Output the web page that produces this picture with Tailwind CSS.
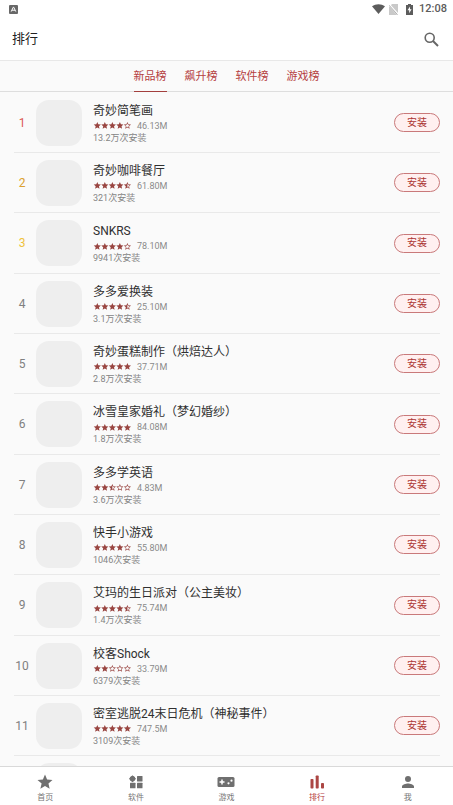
<!DOCTYPE html>
<html lang="zh-CN">
<head>
<meta charset="utf-8">
<meta name="viewport" content="width=device-width, initial-scale=1">
<title>排行</title>
<script src="https://cdn.jsdelivr.net/npm/@tailwindcss/browser@4"></script>
</head>
<body class="flex h-screen flex-col overflow-hidden bg-[#fafafa] font-[Roboto,'Noto_Sans_CJK_SC',sans-serif] text-[#303030]">
<svg class="hidden" aria-hidden="true">
  <symbol id="star" viewBox="0 0 24 24"><path d="M12 17.3 18.2 21l-1.6-7L22 9.2l-7.2-.6L12 2 9.2 8.6 2 9.2 7.5 14l-1.7 7z"/></symbol>
  <symbol id="star-half" viewBox="0 0 24 24"><path d="m22 9.2-7.2-.6L12 2 9.2 8.6 2 9.2 7.5 14l-1.7 7 6.2-3.7 6.2 3.7-1.6-7zM12 15.4V6.1l1.7 4 4.4.4-3.3 2.9 1 4.3z"/></symbol>
  <symbol id="star-empty" viewBox="0 0 24 24"><path d="m22 9.2-7.2-.6L12 2 9.2 8.6 2 9.2 7.5 14l-1.7 7 6.2-3.7 6.2 3.7-1.6-7zM12 15.4l-3.8 2.3 1-4.3-3.3-2.9 4.4-.4 1.7-4 1.7 4 4.4.4-3.3 2.9 1 4.3z"/></symbol>
</svg>

<header class="shrink-0 border-b border-[#e8e8e8] bg-white">
  <div class="flex h-[18px] items-center justify-between pr-1.5 pl-[9px] text-[#5c5c5c]">
    <svg class="size-[9px]" viewBox="0 0 9 9"><rect width="9" height="9" rx="1" fill="#686868"/><path d="M2.2 6.6 4.2 2.3h.6l2 4.3M3 5.2h3" fill="none" stroke="#fff" stroke-width="1"/></svg>
    <div class="flex items-center">
      <svg class="h-2.5 w-[13px]" viewBox="0 0 13 10"><path d="M6.5 10 0 2.2C3.700-.5 9.300-.5 13 2.200z" fill="#5c5c5c"/></svg>
      <svg class="ml-1 h-[11px] w-[9px]" viewBox="0 0 9 11"><path d="M3 0h6v11H0V3z" fill="#c9c9c9"/><path d="m0 .5 9 10" stroke="#fff" stroke-width="2"/><path d="m0 1.200 8.500 9.500" stroke="#999" stroke-width=".8"/></svg>
      <svg class="ml-2 h-[11px] w-[7px]" viewBox="0 0 7 11"><path d="M2 0h3v1h2v10H0V1h2z" fill="#5c5c5c"/><path d="M4 2.500 1.500 6.300h1.700v3L5.600 5.300H4z" fill="#fff"/></svg>
      <span class="ml-1.5 text-[11px] leading-[18px] font-medium">12:08</span>
    </div>
  </div>
  <div class="flex h-[42px] items-center justify-between pr-3.5 pl-3">
    <h1 class="text-[13px] leading-5 text-[#212121]">排行</h1>
    <button type="button" aria-label="搜索"><svg class="size-[15px]" viewBox="0 0 15 15" fill="none" stroke="#666" stroke-width="1.600"><circle cx="5.700" cy="5.700" r="4.500"/><path d="m9 9 5 5" stroke-width="1.900"/></svg></button>
  </div>
</header>

<nav class="flex h-[31px] shrink-0 justify-center gap-[18px] border-b border-[#dedede] text-[11px] text-[#b5403f]" aria-label="榜单">
  <a href="#new" class="-mb-px flex items-center border-b border-[#a33f3d] pt-[3px]" aria-current="page">新品榜</a>
  <a href="#rise" class="flex items-center pt-[3px]">飙升榜</a>
  <a href="#apps" class="flex items-center pt-[3px]">软件榜</a>
  <a href="#games" class="flex items-center pt-[3px]">游戏榜</a>
</nav>

<main class="min-h-0 flex-1 overflow-hidden">
  <ol id="list" class="mr-[13px] ml-3.5 pt-px"></ol>
</main>

<nav class="grid shrink-0 grid-cols-5 border-t border-[#d9d9d9] bg-white pt-1.5 pb-px text-[8px] leading-[13px] text-[#757575]" aria-label="主导航">
  <a href="#home" class="flex flex-col items-center"><svg class="size-[18px]" fill="#6f6f6f"><use href="#star"/></svg>首页</a>
  <a href="#software" class="flex flex-col items-center"><svg class="size-[18px]" viewBox="0 0 18 18" fill="#6f6f6f"><path d="M5.500 2.200 9 5.700 5.500 9.200 2 5.700z"/><circle cx="5.500" cy="5.700" r="2.700"/><rect x="10" y="3" width="5.500" height="5.500" rx=".5"/><rect x="3" y="9.800" width="5.500" height="5.500" rx=".5"/><rect x="10" y="9.800" width="5.500" height="5.500" rx=".5"/></svg>软件</a>
  <a href="#game" class="flex flex-col items-center"><svg class="size-[18px]" viewBox="0 0 18 18"><rect x=".5" y="4" width="17" height="10" rx="1.500" fill="#6f6f6f"/><path d="M2.500 9h5M5 6.500v5" stroke="#fff" stroke-width="1.500"/><circle cx="11.500" cy="10.300" r="1.100" fill="#fff"/><circle cx="14.500" cy="7.700" r="1.100" fill="#fff"/></svg>游戏</a>
  <a href="#rank" class="flex flex-col items-center text-[#b5403f]" aria-current="page"><svg class="size-[18px]" viewBox="0 0 18 18" fill="#ac4644"><rect x="2.500" y="6" width="3" height="9.500" rx=".8"/><rect x="7.700" y="2.500" width="3" height="13" rx=".8"/><rect x="13" y="10" width="3" height="5.500" rx=".8"/></svg>排行</a>
  <a href="#me" class="flex flex-col items-center"><svg class="size-[18px]" viewBox="0 0 24 24" fill="#6f6f6f"><path d="M12 12a4 4 0 1 0 0-8 4 4 0 0 0 0 8zm0 2c-2.700 0-8 1.300-8 4v2h16v-2c0-2.700-5.300-4-8-4z"/></svg>我</a>
</nav>

<script>
const apps = [
  ["奇妙简笔画", 4, "46.13M", "13.2万次安装"],
  ["奇妙咖啡餐厅", 4.5, "61.80M", "321次安装"],
  ["SNKRS", 4, "78.10M", "9941次安装"],
  ["多多爱换装", 4.5, "25.10M", "3.1万次安装"],
  ["奇妙蛋糕制作（烘焙达人）", 5, "37.71M", "2.8万次安装"],
  ["冰雪皇家婚礼（梦幻婚纱）", 5, "84.08M", "1.8万次安装"],
  ["多多学英语", 2.5, "4.83M", "3.6万次安装"],
  ["快手小游戏", 4, "55.80M", "1046次安装"],
  ["艾玛的生日派对（公主美妆）", 4.5, "75.74M", "1.4万次安装"],
  ["校客Shock", 2, "33.79M", "6379次安装"],
  ["密室逃脱24末日危机（神秘事件）", 5, "747.5M", "3109次安装"]
];
const rankColors = ["text-[#dc5a55]", "text-[#dba02f]", "text-[#efc23c]"];
const tile = '<div class="ml-1 size-[46px] shrink-0 rounded-[13px] bg-[#eeeeee]"></div>';
const rowClass = "flex h-[60px] items-center border-b border-[#e9e9e9] nth-[3n]:h-[61px]";
function stars(score) {
  let out = "";
  for (let i = 0; i < 5; i++) {
    const kind = score >= i + 1 ? "star" : score > i ? "star-half" : "star-empty";
    out += `<use href="#${kind}" x="${i * 21}" width="24" height="24"/>`;
  }
  return `<svg class="h-[9px] w-[38px]" viewBox="0 0 106 24" fill="#994541" role="img" aria-label="${score} 星">${out}</svg>`;
}
document.getElementById("list").innerHTML = apps.map(([name, score, size, installs], i) => `
  <li class="${rowClass}">
    <span class="w-4 shrink-0 text-center text-xs ${rankColors[i] || "text-[#808080]"}">${i + 1}</span>
    <div class="w-0.5 shrink-0"></div>
    ${tile}
    <div class="ml-[11px] min-w-0 flex-1">
      <h2 class="truncate text-xs leading-[18px]">${name}</h2>
      <p class="flex items-center gap-1.5 text-[9px] leading-3 text-[#8a8a8a]">${stars(score)}${size}</p>
      <p class="text-[9px] leading-3 text-[#858585]">${installs}</p>
    </div>
    <button type="button" class="h-[19px] w-[46px] shrink-0 rounded-full border border-[#c9797a] bg-[#fff0f0] text-[10px] leading-4 text-[#ac3533]" aria-label="安装 ${name}">安装</button>
  </li>`).join("") + `<li class="${rowClass}"><span class="w-[18px] shrink-0"></span>${tile}</li>`;
</script>
</body>
</html>
